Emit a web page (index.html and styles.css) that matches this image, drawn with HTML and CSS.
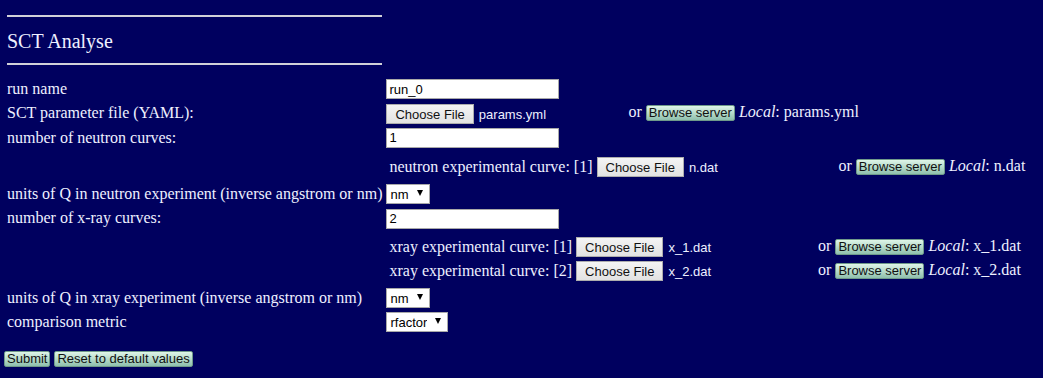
FILE: index.html
```html
<!DOCTYPE html>
<html>
<head>
    <title>SCT Analyse</title>
    <link rel="stylesheet" href="styles.css">
</head>
<body>
    <form>
        <table class="form-table">
            <tr>
                <td>
                    <hr>
                    <h2 class="title">SCT Analyse</h2>
                    <hr class="hr-bottom">
                </td>
                <td></td>
            </tr>
            <tr>
                <td>run name</td>
                <td><input class="text-input" type="text" value="run_0"></td>
            </tr>
            <tr>
                <td>SCT parameter file (YAML):</td>
                <td>
                    <span class="file"><span class="file-btn">Choose File</span><span class="file-name">params.yml</span></span>
                    or <span class="browse">Browse server</span> <i>Local</i>: params.yml
                </td>
            </tr>
            <tr>
                <td>number of neutron curves:</td>
                <td><input class="text-input" type="text" value="1"></td>
            </tr>
            <tr>
                <td></td>
                <td>
                    <table class="curves">
                        <tr>
                            <td>neutron experimental curve: [1]</td>
                            <td>
                                <span class="file"><span class="file-btn">Choose File</span><span class="file-name">n.dat</span></span>
                                or <span class="browse">Browse server</span> <i>Local</i>: n.dat
                            </td>
                        </tr>
                    </table>
                </td>
            </tr>
            <tr>
                <td>units of Q in neutron experiment (inverse angstrom or nm)</td>
                <td><span class="select"><select><option>nm</option></select></span></td>
            </tr>
            <tr>
                <td>number of x-ray curves:</td>
                <td><input class="text-input" type="text" value="2"></td>
            </tr>
            <tr>
                <td></td>
                <td>
                    <table class="curves curves-xray">
                        <tr>
                            <td>xray experimental curve: [1]</td>
                            <td>
                                <span class="file"><span class="file-btn">Choose File</span><span class="file-name">x_1.dat</span></span>
                                or <span class="browse">Browse server</span> <i>Local</i>: x_1.dat
                            </td>
                        </tr>
                        <tr>
                            <td>xray experimental curve: [2]</td>
                            <td>
                                <span class="file"><span class="file-btn">Choose File</span><span class="file-name">x_2.dat</span></span>
                                or <span class="browse">Browse server</span> <i>Local</i>: x_2.dat
                            </td>
                        </tr>
                    </table>
                </td>
            </tr>
            <tr>
                <td>units of Q in xray experiment (inverse angstrom or nm)</td>
                <td><span class="select"><select><option>nm</option></select></span></td>
            </tr>
            <tr>
                <td>comparison metric</td>
                <td><span class="select"><select><option>rfactor</option></select></span></td>
            </tr>
        </table>
        <div class="actions">
            <button type="button" class="green-btn">Submit</button>
            <button type="button" class="green-btn">Reset to default values</button>
        </div>
    </form>
</body>
</html>
```
FILE: styles.css
```css
body {
    margin: 4px;
    background-color: #00005f;
    color: #eef0ff;
    font-family: "Liberation Serif", "Times New Roman", serif;
    font-size: 16px;
}
form {
    margin: 0;
}
.form-table {
    border-spacing: 2px;
    border-collapse: separate;
}
.form-table td {
    padding: 1px;
    white-space: nowrap;
    vertical-align: middle;
}
.curves {
    border-spacing: 2px;
    margin-top: 2px;
}
.curves-xray {
    margin-top: 1px;
}
hr {
    margin: 8px 0;
    border: none;
    border-top: 2px solid #d0d0d8;
    height: 0;
}
.hr-bottom {
    margin-bottom: 10px;
}
.title {
    margin: 13px 0 10px;
    font-size: 20px;
    font-weight: normal;
    line-height: 23px;
}
.text-input {
    box-sizing: border-box;
    width: 173px;
    height: 20px;
    margin: 0;
    padding: 1px 2px;
    border: 1px solid #a9a9a9;
    background: #fff;
    color: #000;
    font-family: "Liberation Sans", Arial, sans-serif;
    font-size: 13px;
    vertical-align: middle;
}
.file {
    display: inline-block;
    width: 238px;
    vertical-align: middle;
    font-family: "Liberation Sans", Arial, sans-serif;
    font-size: 13px;
}
.file-btn {
    display: inline-block;
    box-sizing: border-box;
    height: 20px;
    padding: 2px 8px 0;
    border: 1px solid #adadad;
    background: linear-gradient(#f4f4f4, #e2e2e2);
    color: #111;
    line-height: 15px;
}
.file-name {
    margin-left: 5px;
}
.browse,
.green-btn {
    display: inline-block;
    padding: 0 2px;
    border: 1px solid #6f9a8a;
    border-radius: 2px;
    background: linear-gradient(#dff5e8, #8fc0ad);
    color: #111;
    font-family: "Liberation Sans", Arial, sans-serif;
    font-size: 13px;
    line-height: 14px;
}
.select {
    position: relative;
    display: inline-block;
    height: 20px;
    vertical-align: top;
}
.select select {
    appearance: none;
    -webkit-appearance: none;
    display: block;
    box-sizing: border-box;
    height: 20px;
    margin: 0;
    padding: 0 20px 0 3px;
    border: 1px solid #a9a9a9;
    border-radius: 0;
    background: #fff;
    color: #000;
    font-family: "Liberation Sans", Arial, sans-serif;
    font-size: 13px;
}
.select::after {
    content: "";
    position: absolute;
    right: 7px;
    top: 6px;
    border-left: 3px solid transparent;
    border-right: 3px solid transparent;
    border-top: 6px solid #000;
    pointer-events: none;
}
.actions {
    margin-top: 14px;
}
.green-btn {
    margin: 0;
    height: 16px;
    cursor: pointer;
}
```
